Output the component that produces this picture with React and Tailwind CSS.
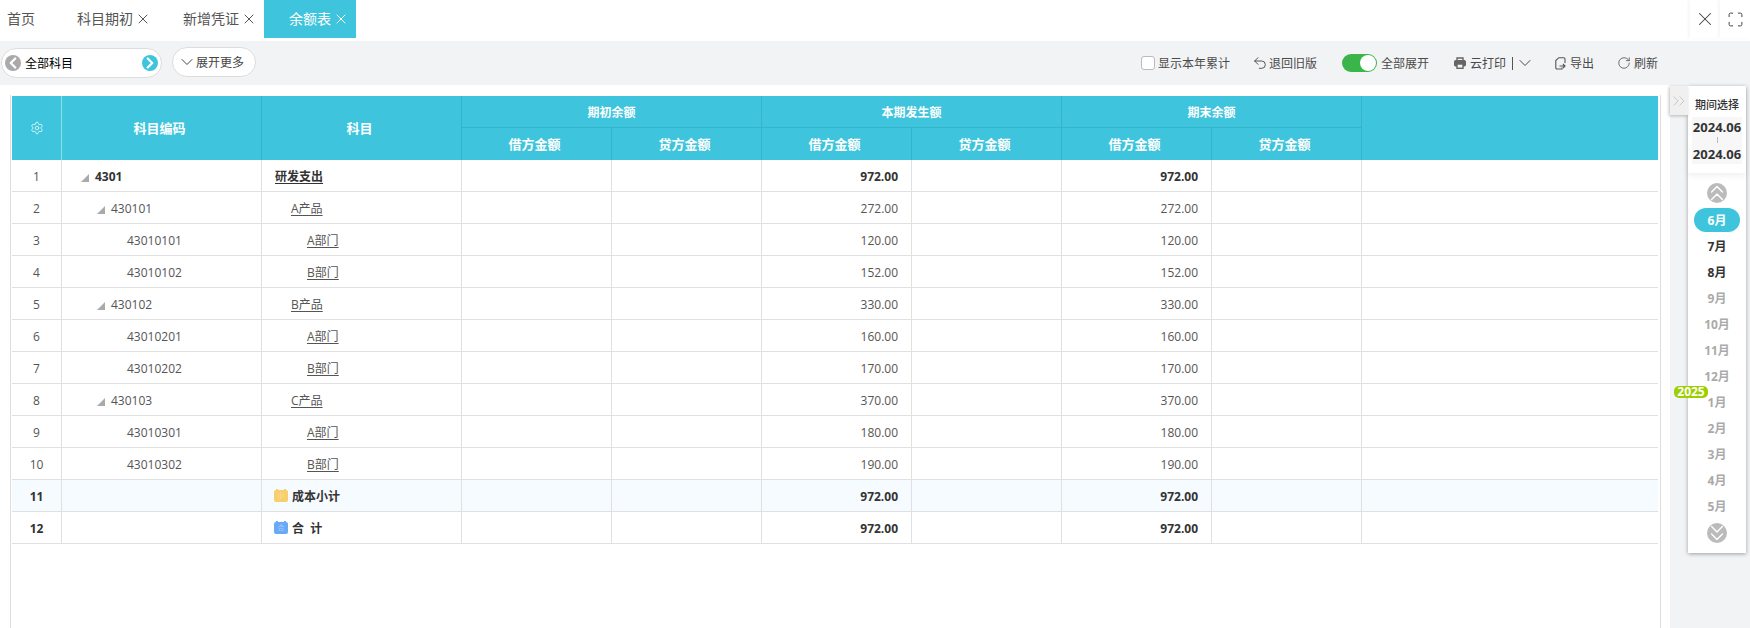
import { X, Maximize, ChevronDown, ChevronsRight, ChevronsUp, ChevronsDown, ChevronLeft, ChevronRight, Settings, Undo2, RotateCw } from 'lucide-react';

const font = 'font-["Open_Sans","Noto_Sans_CJK_SC",sans-serif]';

const rows = [
  { no: 1, code: '4301', name: '研发支出', level: 0, arrow: true, debit: '972.00', end: '972.00' },
  { no: 2, code: '430101', name: 'A产品', level: 1, arrow: true, debit: '272.00', end: '272.00' },
  { no: 3, code: '43010101', name: 'A部门', level: 2, debit: '120.00', end: '120.00' },
  { no: 4, code: '43010102', name: 'B部门', level: 2, debit: '152.00', end: '152.00' },
  { no: 5, code: '430102', name: 'B产品', level: 1, arrow: true, debit: '330.00', end: '330.00' },
  { no: 6, code: '43010201', name: 'A部门', level: 2, debit: '160.00', end: '160.00' },
  { no: 7, code: '43010202', name: 'B部门', level: 2, debit: '170.00', end: '170.00' },
  { no: 8, code: '430103', name: 'C产品', level: 1, arrow: true, debit: '370.00', end: '370.00' },
  { no: 9, code: '43010301', name: 'A部门', level: 2, debit: '180.00', end: '180.00' },
  { no: 10, code: '43010302', name: 'B部门', level: 2, debit: '190.00', end: '190.00' },
];

const months = ['7月', '8月', '9月', '10月', '11月', '12月', '1月', '2月', '3月', '4月', '5月'];

const codePad = ['pl-[19px]', 'pl-[35px]', 'pl-[65px]'];
const namePad = ['pl-[13px]', 'pl-[29px]', 'pl-[45px]'];

const td = 'h-8 border-r border-b border-[#e0e0e0] p-0 pt-[2px] text-xs';
const lastTd = 'h-8 border-b border-[#e0e0e0] p-0';
const th = 'border-r border-b border-[#35b3c9] p-0 pt-[2px] text-xs font-bold text-white text-center';
const subTh = 'border-r border-[#35b3c9] p-0 pt-[2px] pr-1 text-[13px] font-bold text-white text-center';

function Tab({ label, active, className }) {
  return (
    <div className={`flex h-[38px] items-center text-sm ${active ? 'bg-[#3ec5dd] text-white' : 'text-[#555]'} ${className}`}>
      <span>{label}</span>
      <X className="ml-[2px] h-4 w-4" strokeWidth={1.5} />
    </div>
  );
}

function Arrow() {
  return (
    <svg width="8" height="8" viewBox="0 0 8 8" className="mr-[6px] mt-[2px] shrink-0">
      <polygon points="8,0 8,8 0,8" fill="#aaa" />
    </svg>
  );
}

function DayIcon({ color, text }) {
  return (
    <span className={`relative mr-1 mt-[-1px] flex h-[12px] w-[14px] items-center justify-center rounded-[2px] text-[7px] font-normal text-white/40 ${color}`}>
      <span className={`absolute left-[2px] top-[-1px] h-[2px] w-[2px] ${color}`}></span>
      <span className={`absolute right-[2px] top-[-1px] h-[2px] w-[2px] ${color}`}></span>
      {text}
    </span>
  );
}

function PrinterIcon() {
  return (
    <svg width="12" height="12" viewBox="0 0 12 12" fill="none" stroke="#666" strokeWidth="1.4" className="mr-1 shrink-0">
      <path d="M3 3.5V1h6v2.5" />
      <rect x="0.7" y="3.7" width="10.6" height="5" rx="1" fill="#666" />
      <rect x="3" y="7" width="6" height="4.3" fill="#f2f3f5" />
    </svg>
  );
}

function ExportIcon() {
  return (
    <svg width="11" height="13" viewBox="0 0 11 13" fill="none" stroke="#555" strokeWidth="1.1" className="mr-1 shrink-0">
      <path d="M7 10.5V12H2a1.2 1.2 0 0 1-1.2-1.2V3.5L3.8 0.7H8.8A1.2 1.2 0 0 1 10 1.9V6" />
      <path d="M4.5 9H10M8 7l2 2-2 2" />
    </svg>
  );
}

function Money({ value, bold }) {
  return <td className={`${td} pr-[13px] text-right ${bold ? 'font-bold text-[#333]' : 'text-[#555]'}`}>{value}</td>;
}

function Empty() {
  return <td className={td}></td>;
}

function TotalRow({ no, icon, label, tint }) {
  return (
    <tr className={tint ? 'bg-[#f5fbfe]' : ''}>
      <td className={`${td} text-center font-bold text-[#333]`}>{no}</td>
      <Empty />
      <td className={`${td} pl-3 font-bold text-[#333]`}>
        <div className="flex items-center whitespace-pre">{icon}{label}</div>
      </td>
      <Empty />
      <Empty />
      <Money value="972.00" bold />
      <Empty />
      <Money value="972.00" bold />
      <Empty />
      <td className={lastTd}></td>
    </tr>
  );
}

function Table() {
  return (
    <table className="w-[1646px] table-fixed border-separate border-spacing-0">
      <colgroup>
        <col className="w-[50px]" />
        <col className="w-[200px]" />
        <col className="w-[200px]" />
        <col className="w-[150px]" />
        <col className="w-[150px]" />
        <col className="w-[150px]" />
        <col className="w-[150px]" />
        <col className="w-[150px]" />
        <col className="w-[150px]" />
        <col />
      </colgroup>
      <thead className="bg-[#3ec5dd]">
        <tr className="h-[32px]">
          <th rowSpan={2} className="border-r border-[#8fdcea] p-0 text-white">
            <Settings className="mx-auto h-[14px] w-[14px]" strokeWidth={1.25} />
          </th>
          <th rowSpan={2} className={subTh}>科目编码</th>
          <th rowSpan={2} className={subTh}>科目</th>
          <th colSpan={2} className={th}>期初余额</th>
          <th colSpan={2} className={th}>本期发生额</th>
          <th colSpan={2} className={th}>期末余额</th>
          <th rowSpan={2} className="p-0"></th>
        </tr>
        <tr className="h-[32px]">
          <th className={subTh}>借方金额</th>
          <th className={subTh}>贷方金额</th>
          <th className={subTh}>借方金额</th>
          <th className={subTh}>贷方金额</th>
          <th className={subTh}>借方金额</th>
          <th className={subTh}>贷方金额</th>
        </tr>
      </thead>
      <tbody>
        {rows.map((r) => (
          <tr key={r.no}>
            <td className={`${td} text-center text-[#555]`}>{r.no}</td>
            <td className={`${td} ${codePad[r.level]} ${r.level === 0 ? 'font-bold text-[#333]' : 'text-[#555]'}`}>
              <div className="flex items-center">
                {r.arrow && <Arrow />}
                {r.code}
              </div>
            </td>
            <td className={`${td} ${namePad[r.level]} ${r.level === 0 ? 'font-bold text-[#333]' : 'text-[#555]'}`}>
              <span className="underline underline-offset-2">{r.name}</span>
            </td>
            <Empty />
            <Empty />
            <Money value={r.debit} bold={r.level === 0} />
            <Empty />
            <Money value={r.end} bold={r.level === 0} />
            <Empty />
            <td className={lastTd}></td>
          </tr>
        ))}
        <TotalRow no={11} tint label="成本小计" icon={<DayIcon color="bg-[#f7cf6b]" text="小" />} />
        <TotalRow no={12} label="合  计" icon={<DayIcon color="bg-[#69a9f7]" text="合" />} />
      </tbody>
    </table>
  );
}

function CircleBtn({ children, className }) {
  return (
    <div className={`flex h-5 w-5 items-center justify-center rounded-full bg-[#bbb] text-white ${className}`}>
      {children}
    </div>
  );
}

function PeriodPanel() {
  return (
    <div className="relative ml-[18px] mt-px h-[467px] w-[58px] bg-white shadow-[0_1px_4px_rgba(0,0,0,0.35)]">
      <div className="absolute left-[-18px] top-0 flex h-[29px] w-[18px] items-center justify-center bg-[#f0f0f0] shadow-[-1px_1px_3px_rgba(0,0,0,0.25)]">
        <ChevronsRight className="h-5 w-5 shrink-0 text-[#c4c4c4]" strokeWidth={1.1} />
      </div>
      <div className="flex h-[87px] flex-col items-center shadow-[0_3px_6px_rgba(0,0,0,0.06)]">
        <div className="mt-[11px] text-[11px] font-medium leading-4 text-[#333]">期间选择</div>
        <div className="mt-[4px] flex h-[47px] w-[50px] flex-col items-center bg-[#f7f7f7] text-[13px] font-bold leading-[20px] text-[#333]">
          <span>2024.06</span>
          <span className="h-[6px] w-px shrink-0 bg-[#bbb]"></span>
          <span className="mt-px">2024.06</span>
        </div>
      </div>
      <div className="flex flex-col items-center pt-[10px]">
        <CircleBtn><ChevronsUp className="h-[26px] w-[26px] shrink-0" strokeWidth={1.3} /></CircleBtn>
        <div className="mt-[4px] flex h-[26px] w-[46px] items-center justify-center">
          <div className="flex h-6 w-[46px] items-center justify-center rounded-full bg-[#3ec5dd] pt-[2px] text-xs font-bold text-white">6月</div>
        </div>
        {months.map((m, i) => (
          <div key={i} className={`flex h-[26px] items-center pt-[2px] text-xs font-bold ${i < 2 ? 'text-[#333]' : 'text-[#aaa]'}`}>{m}</div>
        ))}
        <CircleBtn className="mt-[4px]"><ChevronsDown className="h-[26px] w-[26px] shrink-0" strokeWidth={1.3} /></CircleBtn>
      </div>
      <div className="absolute left-[-14px] top-[300px] flex h-3 w-[34px] items-center justify-center rounded-[5px] bg-[#9ccf00] text-xs font-bold leading-none text-white">2025</div>
    </div>
  );
}

export default function App() {
  return (
    <div className={`flex h-[628px] w-[1750px] flex-col overflow-hidden bg-white ${font}`}>
      {/* tabs */}
      <div className="flex h-[41px] shrink-0">
        <div className="flex h-[38px] w-[77px] items-center pl-[7px] text-sm text-[#555]">首页</div>
        <Tab label="科目期初" className="w-[106px]" />
        <Tab label="新增凭证" className="w-[81px]" />
        <Tab label="余额表" active className="w-[92px] pl-[25px]" />
        <div className="ml-auto flex h-[38px]">
          <div className="flex w-[30px] items-center justify-center shadow-[-2px_0_3px_rgba(0,0,0,0.04)]">
            <X className="h-[22px] w-[22px] shrink-0 text-[#444]" strokeWidth={1.1} />
          </div>
          <div className="flex w-[30px] items-center justify-center shadow-[-2px_0_3px_rgba(0,0,0,0.04)]">
            <Maximize className="h-[17px] w-[17px] shrink-0 text-[#444]" strokeWidth={1.4} />
          </div>
        </div>
      </div>

      {/* toolbar */}
      <div className="flex h-[44px] shrink-0 items-center bg-[#f2f3f5] text-xs text-[#4a4a4a]">
        <div className="ml-px flex h-[30px] w-[161px] items-center rounded-full border border-[#ddd] bg-white px-[3px]">
          <span className="flex h-4 w-4 items-center justify-center rounded-full bg-[#aaa] text-white">
            <ChevronLeft className="h-[18px] w-[18px] shrink-0" strokeWidth={3} />
          </span>
          <span className="ml-1 flex-1 pt-[2px] text-black">全部科目</span>
          <span className="flex h-4 w-4 items-center justify-center rounded-full bg-[#3ec5dd] text-white">
            <ChevronRight className="h-[18px] w-[18px] shrink-0" strokeWidth={3} />
          </span>
        </div>
        <div className="mb-[2px] ml-[10px] flex h-[30px] w-[84px] items-center rounded-full border border-[#ddd] bg-white pl-[4px] text-[#444]">
          <ChevronDown className="mr-[-1px] h-5 w-5 shrink-0" strokeWidth={1.2} />
          <span className="pt-[2px]">展开更多</span>
        </div>

        <div className="ml-auto flex items-center pr-[92px]">
          <span className="mr-[3px] h-[14px] w-[14px] rounded-[3px] border border-[#bbb] bg-white"></span>
          <span className="pt-[2px]">显示本年累计</span>
          <Undo2 className="ml-[22px] mr-px h-4 w-4 shrink-0" strokeWidth={1.4} />
          <span className="pt-[2px]">退回旧版</span>
          <div className="ml-[25px] mr-[4px] flex h-[18px] w-[35px] items-center justify-end rounded-full bg-[#39b54a] pr-px">
            <span className="h-4 w-4 rounded-full bg-white"></span>
          </div>
          <span className="pt-[2px]">全部展开</span>
          <span className="ml-[25px]"><PrinterIcon /></span>
          <span className="pt-[2px]">云打印</span>
          <span className="ml-[6px] h-[13px] w-px bg-[#555]"></span>
          <ChevronDown className="ml-[2px] mr-[20px] h-5 w-5 shrink-0" strokeWidth={1.2} />
          <ExportIcon />
          <span className="pt-[2px]">导出</span>
          <RotateCw className="ml-[23px] mr-[3px] h-[14px] w-[14px] shrink-0" strokeWidth={1.3} />
          <span className="pt-[2px]">刷新</span>
        </div>
      </div>

      {/* content */}
      <div className="flex min-h-0 flex-1">
        <div className="w-[1670px] shrink-0 pl-[10px] pr-[9px] pt-[10px]">
          <div className="h-full border-x border-[#ddd] pl-px pt-px">
            <Table />
          </div>
        </div>
        <div className="flex-1 bg-[#f2f3f5]">
          <PeriodPanel />
        </div>
      </div>
    </div>
  );
}
